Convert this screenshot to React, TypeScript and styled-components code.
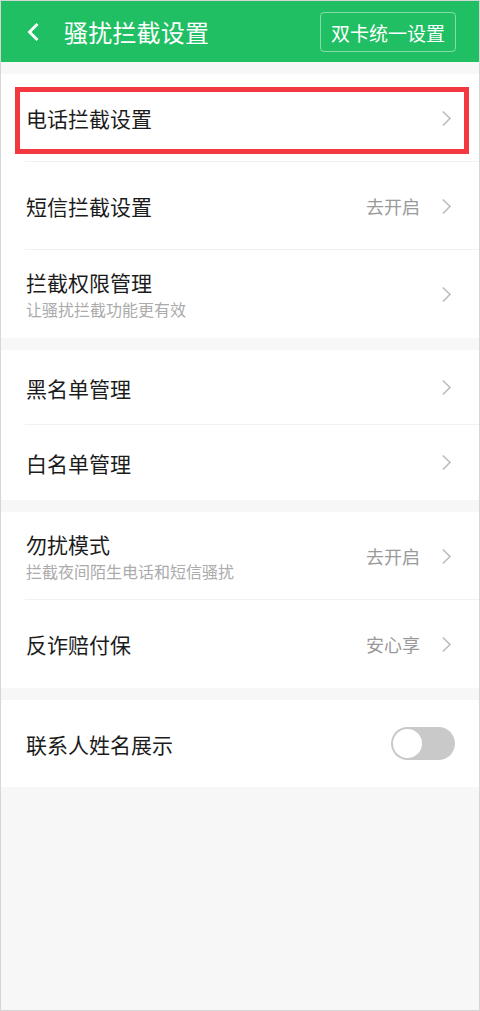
import styled, { createGlobalStyle } from "styled-components";

const GlobalStyle = createGlobalStyle`
  html, body {
    margin: 0;
    padding: 0;
    background: #ffffff;
  }
  * {
    box-sizing: border-box;
  }
`;

const Page = styled.div`
  width: 480px;
  height: 1011px;
  border: 1px solid #d6d6d6;
  background: #f7f7f7;
  font-family: "Noto Sans CJK SC", "Noto Sans", sans-serif;
  overflow: hidden;
  display: flex;
  flex-direction: column;
`;

const Header = styled.header`
  height: 61px;
  background: #20bf63;
  display: flex;
  align-items: center;
  padding: 0 23px 0 25px;
  color: #ffffff;
`;

const BackButton = styled.div`
  width: 20px;
  height: 24px;
  display: flex;
  align-items: center;
  margin-right: 18px;
`;

const Title = styled.h1`
  margin: 0;
  flex: 1;
  font-size: 24px;
  font-weight: 400;
  line-height: 1;
  letter-spacing: 0.2px;
`;

const DualButton = styled.div`
  height: 40px;
  padding: 0 10px;
  border: 1px solid rgba(255, 255, 255, 0.45);
  border-radius: 4px;
  display: flex;
  align-items: center;
  font-size: 19px;
  margin-top: 1px;
`;

const Body = styled.main`
  padding-top: 12px;
  display: flex;
  flex-direction: column;
  gap: 12px;
`;

const Section = styled.section`
  background: #ffffff;
  display: flex;
  flex-direction: column;
`;

const Row = styled.div<{ h: number; last?: boolean }>`
  position: relative;
  height: ${(p) => p.h}px;
  display: flex;
  align-items: center;
  padding: 0 27px 0 25px;
  &::after {
    content: "";
    display: ${(p) => (p.last ? "none" : "block")};
    position: absolute;
    left: 24px;
    right: 0;
    bottom: 0;
    height: 1px;
    background: #f1f1f1;
  }
`;

const Texts = styled.div`
  flex: 1;
  display: flex;
  flex-direction: column;
`;

const Label = styled.div`
  font-size: 21px;
  color: #1c1c1c;
  line-height: 26px;
`;

const Sub = styled.div`
  font-size: 16px;
  color: #ababab;
  line-height: 22px;
  margin-top: 3px;
`;

const Value = styled.span`
  font-size: 18px;
  color: #9a9a9a;
  margin-right: 21px;
`;

const Highlight = styled.div`
  position: absolute;
  left: 14px;
  right: 10px;
  top: 13px;
  bottom: 8px;
  border: 5px solid #f3393f;
  pointer-events: none;
`;

const Switch = styled.div`
  width: 64px;
  height: 33px;
  border-radius: 17px;
  background: #c9c9c9;
  padding: 2px;
  margin-right: -3px;
  display: flex;
  align-items: center;
`;

const Knob = styled.div`
  width: 29px;
  height: 29px;
  border-radius: 50%;
  background: #ffffff;
`;

function Chevron() {
  return (
    <svg width="11" height="17" viewBox="0 0 11 17">
      <path d="M1.8 1.5 L9 8.5 L1.8 15.5" fill="none" stroke="#bdbdbd" strokeWidth="1.6" />
    </svg>
  );
}

interface Item {
  label: string;
  sub?: string;
  value?: string;
}

function SettingRow({ item, h, last, marked }: { item: Item; h: number; last?: boolean; marked?: boolean }) {
  return (
    <Row h={h} last={last}>
      <Texts>
        <Label>{item.label}</Label>
        {item.sub && <Sub>{item.sub}</Sub>}
      </Texts>
      {item.value && <Value>{item.value}</Value>}
      <Chevron />
      {marked && <Highlight />}
    </Row>
  );
}

const groupOne: Item[] = [
  { label: "电话拦截设置" },
  { label: "短信拦截设置", value: "去开启" },
  { label: "拦截权限管理", sub: "让骚扰拦截功能更有效" },
];

const groupTwo: Item[] = [{ label: "黑名单管理" }, { label: "白名单管理" }];

const groupThree: Item[] = [
  { label: "勿扰模式", sub: "拦截夜间陌生电话和短信骚扰", value: "去开启" },
  { label: "反诈赔付保", value: "安心享" },
];

export default function App() {
  return (
    <Page>
      <GlobalStyle />
      <Header>
        <BackButton>
          <svg width="14" height="20" viewBox="0 0 14 20">
            <path d="M11.5 2 L3.5 10 L11.5 18" fill="none" stroke="#fff" strokeWidth="2.8" />
          </svg>
        </BackButton>
        <Title>骚扰拦截设置</Title>
        <DualButton>双卡统一设置</DualButton>
      </Header>
      <Body>
        <Section>
          {groupOne.map((it, i) => (
            <SettingRow key={it.label} item={it} h={88} last={i === groupOne.length - 1} marked={i === 0} />
          ))}
        </Section>
        <Section>
          {groupTwo.map((it, i) => (
            <SettingRow key={it.label} item={it} h={75} last={i === groupTwo.length - 1} />
          ))}
        </Section>
        <Section>
          {groupThree.map((it, i) => (
            <SettingRow key={it.label} item={it} h={88} last={i === groupThree.length - 1} />
          ))}
        </Section>
        <Section>
          <Row h={87} last>
            <Texts>
              <Label>联系人姓名展示</Label>
            </Texts>
            <Switch>
              <Knob />
            </Switch>
          </Row>
        </Section>
      </Body>
    </Page>
  );
}
